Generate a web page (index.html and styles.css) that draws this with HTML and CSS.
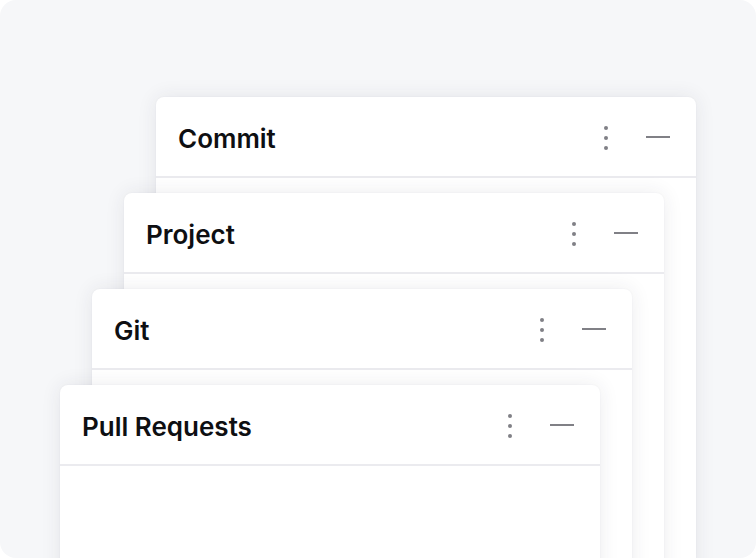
FILE: index.html
```html
<!DOCTYPE html>
<html lang="en">
<head>
<meta charset="utf-8">
<title>Windows</title>
<link rel="stylesheet" href="styles.css">
</head>
<body>
<div class="stage">
  <section class="window w1">
    <header class="win-head">
      <h2 class="win-title">Commit</h2>
      <div class="win-actions">
        <span class="more"><i></i><i></i><i></i></span>
        <span class="minimize"></span>
      </div>
    </header>
  </section>
  <section class="window w2">
    <header class="win-head">
      <h2 class="win-title">Project</h2>
      <div class="win-actions">
        <span class="more"><i></i><i></i><i></i></span>
        <span class="minimize"></span>
      </div>
    </header>
  </section>
  <section class="window w3">
    <header class="win-head">
      <h2 class="win-title">Git</h2>
      <div class="win-actions">
        <span class="more"><i></i><i></i><i></i></span>
        <span class="minimize"></span>
      </div>
    </header>
  </section>
  <section class="window w4">
    <header class="win-head">
      <h2 class="win-title">Pull Requests</h2>
      <div class="win-actions">
        <span class="more"><i></i><i></i><i></i></span>
        <span class="minimize"></span>
      </div>
    </header>
  </section>
</div>
</body>
</html>
```

FILE: styles.css
```css
* { box-sizing: border-box; }
html, body { margin: 0; padding: 0; background: #ffffff; }
body { font-family: Inter, "Noto Sans", "Liberation Sans", sans-serif; }

.stage {
  position: relative;
  width: 756px;
  height: 558px;
  background: #f6f7f9;
  border-radius: 16px;
  overflow: hidden;
}

.window {
  position: absolute;
  width: 540px;
  height: 480px;
  background: #ffffff;
  border-radius: 8px 8px 0 0;
  box-shadow: 0 0 20px rgba(40, 45, 70, 0.09), 0 0 2px rgba(40, 45, 70, 0.05);
}
.w1 { left: 156px; top: 97px; }
.w2 { left: 124px; top: 193px; }
.w3 { left: 92px; top: 289px; }
.w4 { left: 60px; top: 385px; }

.win-head {
  height: 81px;
  border-bottom: 2px solid #ebebef;
  display: flex;
  align-items: center;
  justify-content: space-between;
  padding: 0 26px 0 22px;
}
.win-title {
  margin: 5px 0 0;
  font-size: 26px;
  line-height: 32px;
  font-weight: 600;
  color: #0e0f12;
  letter-spacing: 0;
}
.win-actions {
  display: flex;
  align-items: center;
  gap: 28px;
}
.more {
  width: 24px;
  height: 24px;
  margin-top: 3px;
  display: flex;
  flex-direction: column;
  align-items: center;
  justify-content: center;
  gap: 6px;
}
.more i {
  display: block;
  width: 4px;
  height: 4px;
  border-radius: 50%;
  background: #808086;
}
.minimize {
  display: block;
  width: 24px;
  height: 2px;
  margin-top: 1px;
  background: #808086;
}
```
